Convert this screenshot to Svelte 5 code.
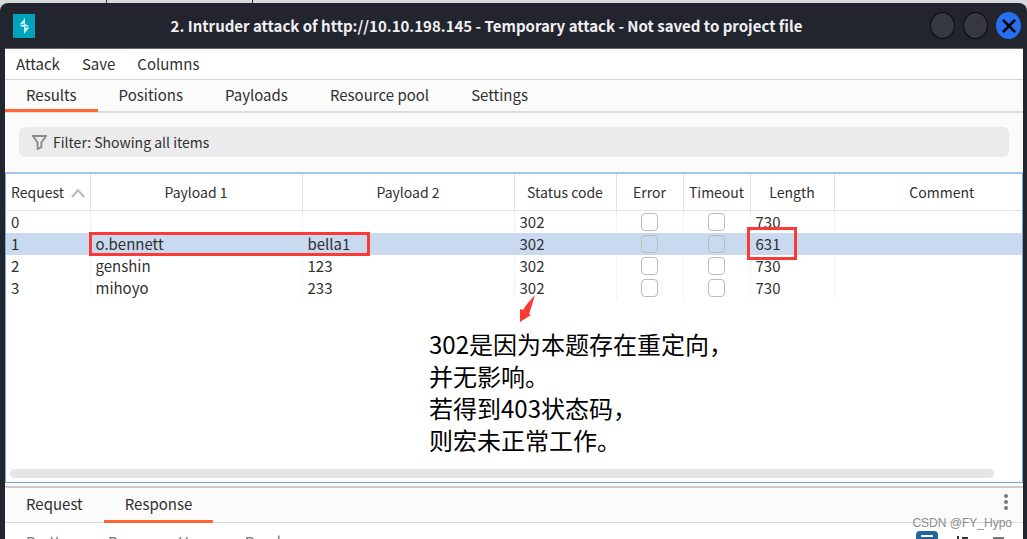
<script lang="ts">
  interface Result {
    id: number;
    payload1: string;
    payload2: string;
    status: number;
    length: number;
  }

  const menus = ['Attack', 'Save', 'Columns'];
  const tabs = ['Results', 'Positions', 'Payloads', 'Resource pool', 'Settings'];
  const views = ['Pretty', 'Raw', 'Hex', 'Render'];

  const results: Result[] = [
    { id: 0, payload1: '', payload2: '', status: 302, length: 730 },
    { id: 1, payload1: 'o.bennett', payload2: 'bella1', status: 302, length: 631 },
    { id: 2, payload1: 'genshin', payload2: '123', status: 302, length: 730 },
    { id: 3, payload1: 'mihoyo', payload2: '233', status: 302, length: 730 },
  ];

  let activeTab = $state('Results');
  let activeMessage = $state('Response');
  let selected = $state(1);
</script>

<div class="desktop">
  <div class="strip"><i></i><i></i></div>
  <div class="window">
    <header class="titlebar">
      <svg class="logo" viewBox="0 0 22 24" aria-hidden="true">
        <rect width="22" height="24" fill="#00a3bb" />
        <path d="M12 4 L7 10 L7 12 L11 13 L11 20 L16 14 L16 12 L12 10 Z" fill="#c9f1f6" />
        <path d="M7 11 L11 10 M12 13 L16 13" stroke="#00a3bb" />
      </svg>
      <h1>2. Intruder attack of http://10.10.198.145 - Temporary attack - Not saved to project file</h1>
      <div class="controls">
        <button aria-label="Minimize"></button>
        <button aria-label="Maximize"></button>
        <button class="close" aria-label="Close">
          <svg viewBox="0 0 12 12"><path d="M2 2 L10 10 M10 2 L2 10" /></svg>
        </button>
      </div>
    </header>

    <div class="body">
      <nav class="menu">
        {#each menus as menu}
          <button>{menu}</button>
        {/each}
      </nav>

      <nav class="tabs">
        {#each tabs as tab}
          <button class:active={activeTab === tab} onclick={() => (activeTab = tab)}>{tab}</button>
        {/each}
      </nav>

      <div class="filter-row">
        <button class="filter">
          <svg viewBox="0 0 16 16" aria-hidden="true">
            <path d="M1 1 H15 L10 8 V13 L6 15 V8 Z" />
          </svg>
          Filter: Showing all items
        </button>
      </div>

      <section class="results">
        <table>
          <colgroup>
            <col class="c-request" />
            <col class="c-payload" />
            <col class="c-payload" />
            <col class="c-status" />
            <col class="c-flag" />
            <col class="c-flag" />
            <col class="c-length" />
            <col />
          </colgroup>
          <thead>
            <tr>
              <th class="sorted">
                Request
                <svg viewBox="0 0 14 10" aria-hidden="true"><path d="M1 9 L7 2 L13 9" /></svg>
              </th>
              <th>Payload 1</th>
              <th>Payload 2</th>
              <th>Status code</th>
              <th>Error</th>
              <th>Timeout</th>
              <th>Length</th>
              <th class="comment">Comment</th>
            </tr>
          </thead>
          <tbody>
            {#each results as row (row.id)}
              <tr class:selected={selected === row.id} onclick={() => (selected = row.id)}>
                <td>{row.id}</td>
                <td>
                  {row.payload1}
                  {#if row.id === 1}<span class="mark payloads"></span>{/if}
                </td>
                <td>{row.payload2}</td>
                <td>{row.status}</td>
                <td class="flag"><input type="checkbox" aria-label="Error" /></td>
                <td class="flag"><input type="checkbox" aria-label="Timeout" /></td>
                <td>
                  {row.length}
                  {#if row.id === 1}<span class="mark length"></span>{/if}
                </td>
                <td></td>
              </tr>
            {/each}
          </tbody>
        </table>

        <div class="note">
          <svg class="arrow" viewBox="0 0 18 28" aria-hidden="true">
            <path d="M17 0 L14 10 L11 19 L13 20 L2 27 L2 14 L5 15 L9 9 Z" fill="#fb3a36" />
          </svg>
          <p>302是因为本题存在重定向，<br />并无影响。<br />若得到403状态码，<br />则宏未正常工作。</p>
        </div>

        <div class="scrollbar"></div>
      </section>

      <section class="message">
        <nav class="tabs">
          {#each ['Request', 'Response'] as tab}
            <button class:active={activeMessage === tab} onclick={() => (activeMessage = tab)}>{tab}</button>
          {/each}
          <button class="more" aria-label="More">
            <svg viewBox="0 0 4 18"><circle cx="2" cy="3" r="2" /><circle cx="2" cy="9" r="2" /><circle cx="2" cy="15" r="2" /></svg>
          </button>
        </nav>
        <div class="views">
          {#each views as view}
            <button>{view}</button>
          {/each}
          <div class="tools">
            <svg viewBox="0 0 92 20" aria-hidden="true">
              <rect width="22" height="20" rx="4" fill="#2264a0" />
              <path d="M5 5 H17 M5 10 H17" stroke="#fff" stroke-width="2" />
              <path d="M42 5 V15 M47 15 V7 H51 V11 H47" fill="none" stroke="#333" stroke-width="2" />
              <path d="M77 7 H88 M77 12 H88" stroke="#777" stroke-width="2" />
            </svg>
          </div>
        </div>
      </section>
    </div>
  </div>
  <span class="watermark">CSDN @FY_Hypo</span>
</div>

<style>
  :global(body) {
    margin: 0;
  }

  .desktop {
    position: relative;
    display: flex;
    flex-direction: column;
    height: 100vh;
    overflow: hidden;
    background: #d8d9da;
    color: #303030;
    font: 15px/22px 'Noto Sans CJK SC', sans-serif;
  }

  button {
    margin: 0;
    padding: 0;
    border: 0;
    background: none;
    color: inherit;
    font: inherit;
    white-space: nowrap;
  }

  .strip {
    display: flex;
    flex: none;
    gap: 145px;
    height: 3px;
    padding-left: 106px;
  }

  .strip i {
    width: 1px;
    background: #333;
  }

  .window {
    display: flex;
    flex: 1;
    flex-direction: column;
    min-height: 0;
    padding: 0 4px 0 5px;
    border-radius: 8px 8px 0 0;
    background: #23252e;
  }

  .titlebar {
    display: flex;
    flex: none;
    align-items: center;
    height: 45px;
    padding-left: 8px;
    border-bottom: 1px solid #66666d;
  }

  .logo {
    width: 22px;
    height: 24px;
  }

  h1 {
    flex: 1;
    margin: 0;
    padding-left: 8px;
    color: #f0f0f2;
    font-size: 15px;
    font-weight: bold;
    text-align: center;
    white-space: nowrap;
  }

  .controls {
    display: flex;
    gap: 8px;
    padding-right: 2px;
  }

  .controls button {
    display: grid;
    place-items: center;
    box-sizing: border-box;
    width: 25px;
    height: 27px;
    border: 1px solid #0a0b0e;
    border-radius: 50%;
    background: #353743;
  }

  .controls .close {
    border: 0;
    background: #266ff0;
  }

  .close svg {
    width: 16px;
    height: 16px;
    stroke: #000;
    stroke-width: 2;
    stroke-linecap: round;
  }

  .body {
    display: flex;
    flex: 1;
    flex-direction: column;
    min-height: 0;
    background: #fbfbfb;
  }

  .menu {
    display: flex;
    flex: none;
    gap: 22px;
    height: 30px;
    padding-left: 11px;
    border-bottom: 1px solid #d3d3d3;
    background: #fff;
  }

  .tabs {
    display: flex;
    flex: none;
    height: 31px;
    border-bottom: 2px solid #d8dcda;
  }

  .tabs button {
    margin-bottom: -1px;
    padding: 0 21px;
    border-bottom: 3px solid transparent;
  }

  .tabs .active {
    border-bottom-color: #ff6633;
  }

  .filter-row {
    flex: none;
    padding: 14px 14px 15px;
  }

  .filter {
    display: flex;
    align-items: center;
    gap: 6px;
    width: 100%;
    height: 30px;
    padding-left: 13px;
    border-radius: 6px;
    background: #ebebeb;
    font-size: 14px;
  }

  .filter svg {
    width: 15px;
    height: 15px;
    fill: none;
    stroke: #8a8a8a;
    stroke-width: 2;
  }

  .results {
    display: flex;
    flex: none;
    flex-direction: column;
    border: 1px solid #7aa9dc;
    border-top: 2px solid #a5c5e8;
    background: #fff;
  }

  table {
    width: 100%;
    border-collapse: collapse;
    table-layout: fixed;
  }

  .c-request {
    width: 84px;
  }

  .c-payload {
    width: 212px;
  }

  .c-status {
    width: 102px;
  }

  .c-flag {
    width: 67px;
  }

  .c-length {
    width: 84px;
  }

  th {
    height: 36px;
    padding: 0;
    border-right: 1px solid #e2e2e2;
    border-bottom: 1px solid #e2e2e2;
    font-size: 14px;
    font-weight: normal;
    white-space: nowrap;
  }

  th:last-child,
  td:last-child {
    border-right: 0;
  }

  .sorted {
    padding-left: 5px;
    text-align: left;
  }

  .sorted svg {
    width: 14px;
    height: 10px;
    margin-left: 4px;
    fill: none;
    stroke: #bbb;
    stroke-width: 2;
  }

  .comment {
    padding-left: 27px;
  }

  td {
    position: relative;
    height: 22px;
    padding: 0 0 0 5px;
    border-right: 1px solid #f2f2f2;
    line-height: 22px;
  }

  .selected td {
    border-right-color: #c9d9f0;
    background: #c9d9f0;
  }

  .flag {
    padding: 0;
    font-size: 0;
    text-align: center;
  }

  .flag input {
    width: 17px;
    height: 18px;
    margin: 0;
    border: 1px solid #bbb;
    border-radius: 4px;
    appearance: none;
    vertical-align: middle;
  }

  .mark {
    position: absolute;
    z-index: 1;
    border: 3px solid #fb3a36;
  }

  .payloads {
    top: -1px;
    left: -2px;
    width: 275px;
    height: 18px;
  }

  .length {
    top: -6px;
    left: -4px;
    width: 44px;
    height: 27px;
  }

  .note {
    display: flex;
    flex-direction: column;
    z-index: 1;
    margin: -4px 0 13px 423px;
    color: #000;
    font-size: 24px;
    line-height: 32px;
  }

  .arrow {
    width: 18px;
    height: 28px;
    margin-left: 89px;
  }

  .note p {
    margin: 5px 0 0;
  }

  .scrollbar {
    height: 9px;
    margin: 0 28px 4px 4px;
    border-radius: 5px;
    background: #e5e5e5;
  }

  .message {
    flex: none;
    margin-top: 3px;
    border-top: 2px solid #cfc9ca;
  }

  .message .tabs {
    height: 34px;
    border-bottom-width: 1px;
  }

  .message .more {
    margin-left: auto;
    padding: 0 15px;
  }

  .more svg {
    width: 4px;
    height: 18px;
    fill: #777;
  }

  .views {
    display: flex;
    align-items: flex-start;
    gap: 40px;
    height: 40px;
    padding: 8px 15px 0 21px;
    background: #fff;
    color: #777;
  }

  .tools {
    margin-left: auto;
  }

  .tools svg {
    width: 92px;
    height: 20px;
  }

  .watermark {
    position: absolute;
    right: 15px;
    bottom: 8px;
    color: #8c8c8c;
    font: 12px/16px 'Liberation Sans', sans-serif;
  }
</style>
